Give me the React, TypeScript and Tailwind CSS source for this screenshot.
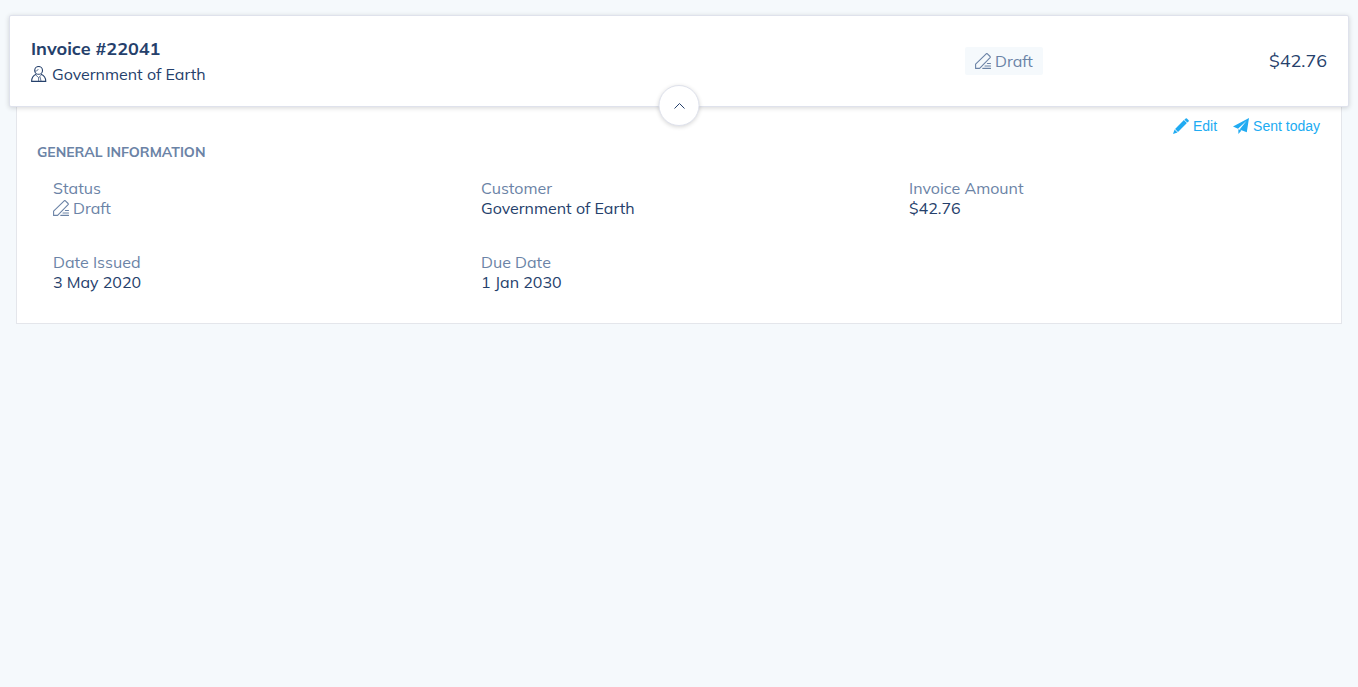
import { useState, type ReactNode } from "react";

function PersonIcon() {
  return (
    <svg viewBox="0 0 16 16" className="h-4 w-4 shrink-0" fill="none" stroke="currentColor" strokeWidth="1.1" strokeLinejoin="round" aria-hidden="true">
      <circle cx="7.6" cy="4.4" r="3.9" />
      <path d="M5.2 8.2C2.3 9.4 .6 12 .6 15.4H14.8C14.8 12 13 9.4 10 8.2" />
      <path d="M4.8 9L7.6 11.6L10.4 9M7.6 11.6V15.2M4 5.2C6 5 7 4 7.4 3M9 10.8L10 15" strokeWidth=".7" />
    </svg>
  );
}

function DraftIcon() {
  return (
    <svg viewBox="0 0 16 16" className="h-4 w-4 shrink-0" fill="none" stroke="currentColor" strokeWidth="1.1" strokeLinejoin="round" strokeLinecap="round" aria-hidden="true">
      <path d="M.6 15.4V11.2L11.2 .8Q11.8 .4 12.4 .8L15.1 3.5Q15.6 4.1 15.1 4.7L4.6 15.4Z" />
      <path d="M7.8 15.4H15.5M10 13H15.5M12.4 10.5H15.5" />
    </svg>
  );
}

function PencilIcon() {
  return (
    <svg viewBox="0 0 16 16" className="h-4 w-4 shrink-0" fill="currentColor" aria-hidden="true">
      <path d="M12.7.4Q13.3 0 13.9.5L15.6 2.2Q16.1 2.8 15.6 3.4L14.3 4.6L11.4 1.7Z" />
      <path d="M10.9 2.1L13.9 5.1L5 13.9L2.1 11Z" />
      <path d="M1.6 11.5L4.5 14.4L0 16Z" />
    </svg>
  );
}

function PlaneIcon() {
  return (
    <svg viewBox="0 0 16 16" className="h-4 w-4 shrink-0" fill="currentColor" aria-hidden="true">
      <path d="M16 0L0 8.4L5 10.8L13.6 2.8L6.6 11.4L13.8 14.2Z" />
      <path d="M5.4 11.2V16L8.4 12.5Z" />
    </svg>
  );
}

function Field({ label, children }: { label: string; children: ReactNode }) {
  return (
    <div className="px-4">
      <dt className="text-[#6b83a6]">{label}</dt>
      <dd>{children}</dd>
    </div>
  );
}

export default function App() {
  const [open, setOpen] = useState(true);
  return (
    <main className="min-h-screen bg-[#f5f9fc] px-[9px] pt-[15px] font-['Muli','Mulish','Noto_Sans',sans-serif] text-base leading-5 text-[#25406b]">
      <header className="relative flex items-center rounded-xs border border-[#dfe2ec] bg-white px-[21px] pt-[21px] pb-[22px] shadow-[0_1px_5px_rgba(0,0,0,0.16)]">
        <div className="flex-1">
          <h1 className="text-lg leading-6 font-bold">Invoice #22041</h1>
          <p className="mt-[3px] flex items-center gap-[5px]">
            <PersonIcon />
            <span>Government of Earth</span>
          </p>
        </div>
        <span className="mr-[226px] flex h-7 items-center gap-1 rounded-xs bg-[#f5f9fc] px-[10px] text-[#6b83a6]">
          <DraftIcon />
          Draft
        </span>
        <p className="text-lg leading-6">$42.76</p>
        <button
          type="button"
          aria-label="Toggle invoice details"
          aria-expanded={open}
          onClick={() => setOpen(!open)}
          className="absolute -bottom-5 left-1/2 flex h-[41px] w-[41px] -translate-x-1/2 items-center justify-center rounded-full border border-[#dfe2ec] bg-white shadow-[0_1px_4px_rgba(0,0,0,0.16)]"
        >
          <svg viewBox="0 0 12 12" className="h-3 w-3" fill="none" stroke="currentColor" strokeWidth="1" aria-hidden="true">
            <path d="M1 8.5L6 3.5L11 8.5" />
          </svg>
        </button>
      </header>
      {open && (
        <section className="mx-[7px] border border-t-0 border-[#e4e6eb] bg-white px-5 pt-[9px] pb-[31px]">
          <div className="flex h-5 items-center justify-end gap-4 pr-px font-['Liberation_Sans',sans-serif] text-sm text-[#20abf2]">
            <button type="button" className="flex items-center gap-1">
              <PencilIcon />
              Edit
            </button>
            <button type="button" className="flex items-center gap-1">
              <PlaneIcon />
              Sent today
            </button>
          </div>
          <h2 className="mt-[6px] text-sm leading-5 font-bold text-[#6b83a6] uppercase">General Information</h2>
          <dl className="mt-4 grid grid-cols-3 gap-y-[34px]">
            <Field label="Status">
              <span className="flex items-center gap-1 text-[#6b83a6]">
                <DraftIcon />
                Draft
              </span>
            </Field>
            <Field label="Customer">Government of Earth</Field>
            <Field label="Invoice Amount">$42.76</Field>
            <Field label="Date Issued">3 May 2020</Field>
            <Field label="Due Date">1 Jan 2030</Field>
          </dl>
        </section>
      )}
    </main>
  );
}
